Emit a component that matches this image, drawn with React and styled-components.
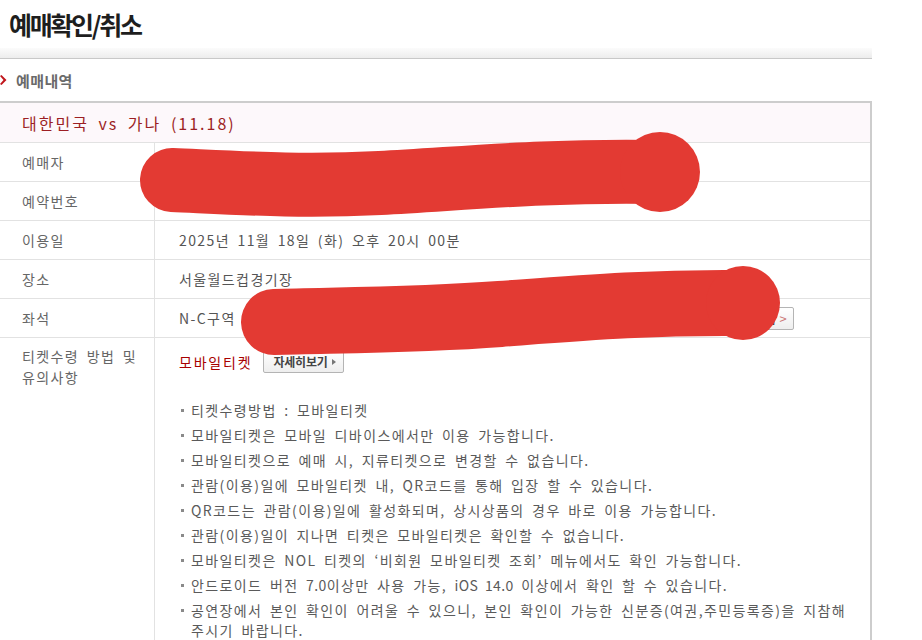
import React from "react";
import styled, { createGlobalStyle } from "styled-components";

const GlobalStyle = createGlobalStyle`
  html, body {
    margin: 0;
    padding: 0;
    background: #fff;
  }
  body {
    font-family: "Noto Sans CJK KR", "Noto Sans", sans-serif;
    color: #555;
  }
`;

const Page = styled.div`
  position: relative;
  width: 872px;
  overflow: hidden;
`;

const PageTitle = styled.h1`
  margin: 0;
  height: 48px;
  display: flex;
  align-items: center;
  padding-left: 9px;
  font-size: 25px;
  font-weight: 700;
  letter-spacing: -2.3px;
  color: #1e1e1e;
`;

const TopBar = styled.div`
  height: 10px;
  background: linear-gradient(#fbfbfb, #ececec);
  border-bottom: 1px solid #c8c8c8;
`;

const SectionHead = styled.h2`
  margin: 0;
  height: 42px;
  display: flex;
  align-items: center;
  gap: 9px;
  font-size: 15px;
  font-weight: 700;
  letter-spacing: 0.4px;
  color: #6a6a6a;
`;

const Box = styled.div`
  border-top: 2px solid #cdcdcd;
  border-right: 2px solid #cdcdcd;
`;

const EventTitle = styled.div`
  height: 39px;
  display: flex;
  align-items: center;
  padding-left: 22px;
  background: #fdf8fb;
  border-bottom: 1px solid #e2e2e2;
  font-size: 16px;
  letter-spacing: 2px;
  word-spacing: 4px;
  color: #9c1f24;
`;

const Row = styled.div`
  display: grid;
  grid-template-columns: 155px 1fr;
  border-bottom: ${({ $last }) => ($last ? "none" : "1px solid #e2e2e2")};
  min-height: 38px;
`;

const Label = styled.div`
  border-right: 1px solid #e2e2e2;
  padding: ${({ $tall }) => ($tall ? "8px 6px 0 22px" : "0 6px 0 22px")};
  display: flex;
  align-items: ${({ $tall }) => ($tall ? "flex-start" : "center")};
  font-size: 14px;
  line-height: 21px;
  letter-spacing: 1.4px;
  word-spacing: 3px;
  color: #666;
`;

const Value = styled.div`
  padding: ${({ $tall }) => ($tall ? "12px 0 0 24px" : "0 0 0 24px")};
  display: flex;
  flex-direction: ${({ $tall }) => ($tall ? "column" : "row")};
  align-items: ${({ $tall }) => ($tall ? "flex-start" : "center")};
  gap: 8px;
  font-size: 14px;
  letter-spacing: 1.4px;
  word-spacing: 3px;
  color: #555;
`;

const SeatText = styled.span`
  width: ${({ $w }) => $w}px;
  white-space: nowrap;
  overflow: hidden;
`;

const SmallButton = styled.button`
  display: inline-flex;
  align-items: center;
  gap: 4px;
  height: 23px;
  padding: 0 7px 0 9px;
  border: 1px solid #b4b4b4;
  border-radius: 2px;
  background: linear-gradient(#ffffff, #eeeeee);
  font-family: "Noto Sans CJK KR", sans-serif;
  font-size: 12px;
  font-weight: 700;
  letter-spacing: -0.2px;
  color: #444;
  cursor: pointer;
`;

const Tri = styled.span`
  width: 0;
  height: 0;
  border-top: 3px solid transparent;
  border-bottom: 3px solid transparent;
  border-left: 4px solid ${({ $color }) => $color || "#777"};
`;

const Chevron = styled.span`
  font-size: 13px;
  font-weight: 400;
  color: #c77;
`;

const MethodLine = styled.div`
  display: flex;
  align-items: center;
  gap: 11px;
`;

const Mobile = styled.span`
  color: #a80000;
  letter-spacing: 1.8px;
`;

const Notes = styled.ul`
  list-style: none;
  margin: 19px 20px 8px 0;
  padding: 0;
  display: flex;
  flex-direction: column;
  gap: 5px;
`;

const Note = styled.li`
  position: relative;
  padding-left: 12px;
  line-height: 20px;
  color: #5a5a5a;

  &::before {
    content: "";
    position: absolute;
    left: 2px;
    top: 9px;
    width: 3px;
    height: 3px;
    background: #8a8a8a;
  }
`;

const Latin = styled.span`
  letter-spacing: 0.4px;
`;

const Redaction = styled.svg`
  position: absolute;
  left: 0;
  top: 0;
  pointer-events: none;
`;

const notes = [
  "티켓수령방법 : 모바일티켓",
  "모바일티켓은 모바일 디바이스에서만 이용 가능합니다.",
  "모바일티켓으로 예매 시, 지류티켓으로 변경할 수 없습니다.",
  "관람(이용)일에 모바일티켓 내, QR코드를 통해 입장 할 수 있습니다.",
  "QR코드는 관람(이용)일에 활성화되며, 상시상품의 경우 바로 이용 가능합니다.",
  "관람(이용)일이 지나면 티켓은 모바일티켓은 확인할 수 없습니다.",
  "모바일티켓은 NOL 티켓의 ‘비회원 모바일티켓 조회’ 메뉴에서도 확인 가능합니다.",
  <>
    안드로이드 버전 <Latin>7.0</Latin>이상만 사용 가능, <Latin>iOS 14.0</Latin> 이상에서 확인 할 수 있습니다.
  </>,
  "공연장에서 본인 확인이 어려울 수 있으니, 본인 확인이 가능한 신분증(여권,주민등록증)을 지참해 주시기 바랍니다.",
];

export default function App() {
  return (
    <Page>
      <GlobalStyle />
      <PageTitle>예매확인/취소</PageTitle>
      <TopBar />
      <SectionHead>
        <svg width="7" height="10" viewBox="0 0 7 10">
          <path d="M0 1 L1.5 0 L6.5 5 L1.5 10 L0 9 L3.5 5 Z" fill="#c0161c" />
        </svg>
        예매내역
      </SectionHead>
      <Box>
        <EventTitle>대한민국 vs 가나 (11.18)</EventTitle>
        <Row>
          <Label>예매자</Label>
          <Value>홍길동</Value>
        </Row>
        <Row>
          <Label>예약번호</Label>
          <Value>T0000000000</Value>
        </Row>
        <Row>
          <Label>이용일</Label>
          <Value>2025년 11월 18일 (화) 오후 20시 00분</Value>
        </Row>
        <Row>
          <Label>장소</Label>
          <Value>서울월드컵경기장</Value>
        </Row>
        <Row>
          <Label>좌석</Label>
          <Value>
            <SeatText $w={535}>N-C구역 0층 00열 00번</SeatText>
            <SmallButton>
              좌석보기 <Chevron>&gt;</Chevron>
            </SmallButton>
          </Value>
        </Row>
        <Row $last>
          <Label $tall>티켓수령 방법 및 유의사항</Label>
          <Value $tall>
            <MethodLine>
              <Mobile>모바일티켓</Mobile>
              <SmallButton>
                자세히보기
                <Tri />
              </SmallButton>
            </MethodLine>
            <Notes>
              {notes.map((n, i) => (
                <Note key={i}>{n}</Note>
              ))}
            </Notes>
          </Value>
        </Row>
      </Box>
      <Redaction width="872" height="640" viewBox="0 0 872 640">
        <g fill="none" stroke="#e33a33" strokeLinecap="round" strokeLinejoin="round">
          <path d="M172 180 C 240 183, 300 187, 380 183 S 540 170, 660 172" strokeWidth="64" />
          <circle cx="660" cy="172" r="40" fill="#e33a33" stroke="none" />
          <path d="M274 322 C 350 320, 420 320, 500 314 S 650 302, 743 303" strokeWidth="66" />
          <circle cx="743" cy="303" r="37" fill="#e33a33" stroke="none" />
        </g>
      </Redaction>
    </Page>
  );
}
